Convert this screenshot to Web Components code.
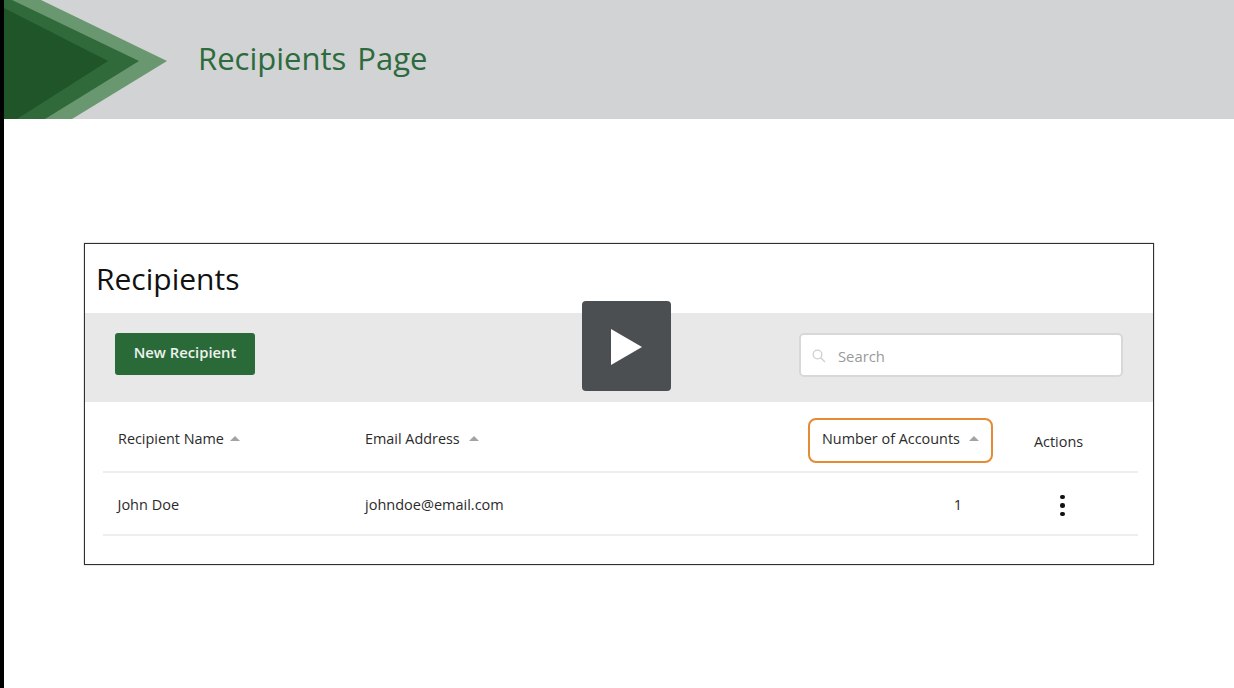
<!DOCTYPE html>
<html>
<head>
<meta charset="utf-8">
<title>Recipients Page</title>
<style>
    html, body { margin: 0; height: 100%; background: #fff; }
    body { font-family: "Open Sans", "Liberation Sans", sans-serif; overflow: hidden; }
</style>
</head>
<body>
<video-frame>
    <page-banner slot="banner">Recipients Page</page-banner>
    <recipients-card>
        <toolbar-row slot="toolbar"></toolbar-row>
        <recipients-table slot="table"></recipients-table>
    </recipients-card>
</video-frame>
<script>
    customElements.define('video-frame', class extends HTMLElement {
        constructor() {
            super()
            this.attachShadow({mode: 'open'}).innerHTML = `
                <style>
                    :host { display: flex; height: 688px; position: relative; border-left: 4px solid #000; box-sizing: border-box; background: #fff; }
                    .main { flex: 1; display: flex; flex-direction: column; min-width: 0; }
                    .stage { padding: 124px 80px 0 80px; }
                    .play { position: absolute; left: 578px; top: 301px; width: 89px; height: 90px; background: #4c4f52; border-radius: 4px; display: flex; align-items: center; justify-content: center; padding: 2px 2px 0 0; box-sizing: border-box; }
                    svg { display: block; }
                </style>
                <div class="main">
                    <slot name="banner"></slot>
                    <div class="stage"><slot></slot></div>
                </div>
                <div class="play"><svg width="32" height="36" viewBox="0 0 32 36"><path d="M1 0 L32 18 L1 36 Z" fill="#fff"/></svg></div>`
        }
    })

    customElements.define('page-banner', class extends HTMLElement {
        constructor() {
            super()
            this.attachShadow({mode: 'open'}).innerHTML = `
                <style>
                    :host { display: flex; align-items: center; gap: 30px; height: 119px; background: #d1d3d4; color: #2d6a3c; font-size: 31px; word-spacing: 3px; overflow: hidden; }
                    svg { display: block; flex: none; }
                    .title { position: relative; top: -2px; }
                </style>
                <svg width="164" height="119" viewBox="0 0 164 119">
                    <path d="M0 0 H37 L163 61 L68 119 H0 Z" fill="#69976f"/>
                    <path d="M0 0 H8 L135 61 L41 119 H0 Z" fill="#30693a"/>
                    <path d="M0 8 L104 61 L13 119 H0 Z" fill="#20552a"/>
                </svg>
                <span class="title"><slot></slot></span>`
        }
    })

    customElements.define('recipients-card', class extends HTMLElement {
        constructor() {
            super()
            this.attachShadow({mode: 'open'}).innerHTML = `
                <style>
                    :host { display: block; width: 1070px; height: 322px; box-sizing: border-box; border: 1px solid #2f3133; box-shadow: 0 0 1px #6a6c6e; background: #fff; color: #1c1c1c; }
                    h1 { margin: 0; height: 69px; padding-left: 11px; font-size: 30px; font-weight: 400; line-height: 70px; color: #111; }
                </style>
                <h1>Recipients</h1>
                <slot name="toolbar"></slot>
                <slot name="table"></slot>`
        }
    })

    customElements.define('toolbar-row', class extends HTMLElement {
        constructor() {
            super()
            this.attachShadow({mode: 'open'}).innerHTML = `
                <style>
                    :host { display: flex; justify-content: space-between; align-items: flex-start; height: 89px; box-sizing: border-box; padding: 20px 30px 0 30px; background: #e8e8e8; }
                    .btn { width: 140px; height: 42px; background: #2a6a39; color: #eef3ee; border-radius: 3px; font-size: 14.8px; font-weight: 600; display: flex; align-items: center; justify-content: center; padding-bottom: 4px; box-sizing: border-box; }
                    .search { width: 324px; height: 44px; box-sizing: border-box; background: #fff; border: 2px solid #d8d8d8; border-radius: 5px; display: flex; align-items: center; gap: 12px; padding: 2px 0 0 11px; color: #9a9a9a; font-size: 14.8px; }
                    svg { display: block; }
                </style>
                <div class="btn">New Recipient</div>
                <div class="search">
                    <svg width="14" height="14" viewBox="0 0 14 14" fill="none" stroke="#cfcfcf" stroke-width="1.3"><circle cx="5.5" cy="5.5" r="4.3"/><path d="M8.7 8.7 L13 13"/></svg>
                    <span>Search</span>
                </div>`
        }
    })

    customElements.define('sort-head', class extends HTMLElement {
        constructor() {
            super()
            this.attachShadow({mode: 'open'}).innerHTML = `
                <style>
                    :host { display: inline-flex; align-items: center; gap: var(--gap, 6px); font-size: 14.4px; color: #2b2b2b; }
                    i { display: block; width: 0; height: 0; border-left: 5px solid transparent; border-right: 5px solid transparent; border-bottom: 5px solid #a3a3a3; }
                </style>
                <slot></slot><i></i>`
        }
    })

    customElements.define('recipients-table', class extends HTMLElement {
        constructor() {
            super()
            this.attachShadow({mode: 'open'}).innerHTML = `
                <style>
                    :host { display: block; margin: 0 15px 0 18px; font-size: 14.5px; color: #2b2b2b; }
                    .row { display: grid; grid-template-columns: 247px 443px 226px 1fr; align-items: center; box-sizing: border-box; border-bottom: 2px solid #eeeeee; }
                    .head { height: 71px; }
                    .body { height: 63px; }
                    .c { padding-left: 15px; }
                    .body .c { padding-left: 14.5px; }
                    .email { padding-left: 15px !important; }
                    .focus { width: 185px; height: 45px; box-sizing: border-box; border: 2px solid #e58a35; border-radius: 8px; display: flex; align-items: center; padding: 0 0 4px 12px; --gap: 9px; margin: 8px 0 0 15px; }
                    .actions { padding-left: 15px; font-size: 14.4px; position: relative; top: 5px; }
                    .num { text-align: right; position: relative; left: -57px; }
                    .email-head { --gap: 9px; }
                    .kebab { display: flex; flex-direction: column; gap: 4px; width: 5px; margin-left: 41px; position: relative; top: 1px; }
                    .kebab b { display: block; width: 4.5px; height: 4.5px; border-radius: 50%; background: #111; }
                    .head .c { position: relative; top: 2px; }
                    .body > div { position: relative; top: 1px; }
                </style>
                <div class="row head">
                    <div class="c"><sort-head>Recipient Name</sort-head></div>
                    <div class="c email email-head"><sort-head>Email Address</sort-head></div>
                    <div><sort-head class="focus">Number of Accounts</sort-head></div>
                    <div class="actions">Actions</div>
                </div>
                <div class="row body">
                    <div class="c">John Doe</div>
                    <div class="c email">johndoe@email.com</div>
                    <div class="num">1</div>
                    <div class="kebab-cell"><div class="kebab"><b></b><b></b><b></b></div></div>
                </div>`
        }
    })
</script>
</body>
</html>
